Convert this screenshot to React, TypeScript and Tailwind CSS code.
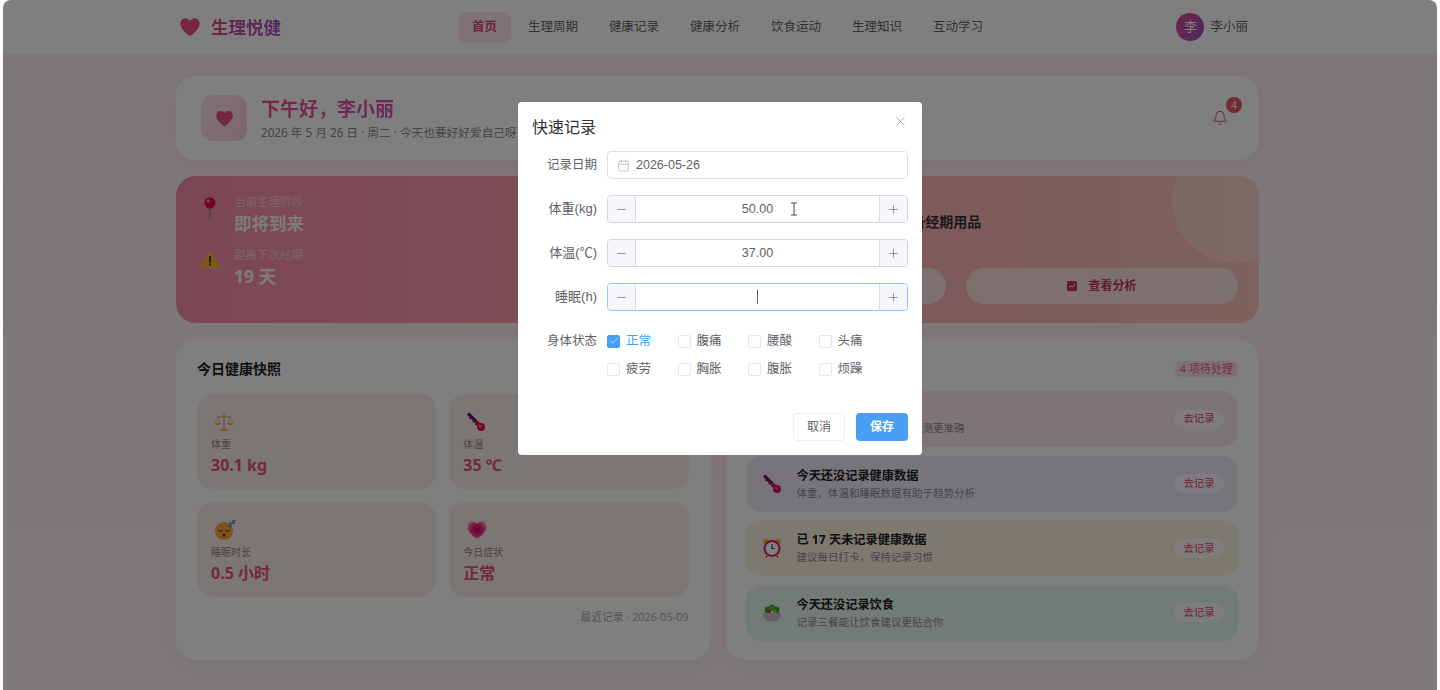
import type { ReactNode } from "react";
import { Bell, Calendar, Minus, Plus, X, Check } from "lucide-react";

const navItems = ["生理周期", "健康记录", "健康分析", "饮食运动", "生理知识", "互动学习"];
const statusItems = ["正常", "腹痛", "腰酸", "头痛", "疲劳", "胸胀", "腹胀", "烦躁"];
const heartPath =
  "M12 21.5c-.6 0-1.2-.3-1.7-.7C6.6 17.6 1.5 13.6 1.5 8.2 1.5 4.9 4 2.5 7 2.5c2 0 3.8 1 5 2.7 1.2-1.7 3-2.7 5-2.7 3 0 5.5 2.4 5.5 5.7 0 5.4-5.1 9.4-8.8 12.6-.5.4-1.1.7-1.7.7z";

function Heart({ className }: { className: string }) {
  return (
    <svg viewBox="0 0 24 24" className={className} fill="#ea4c89">
      <path d={heartPath} />
    </svg>
  );
}

function PinIcon() {
  return (
    <svg viewBox="0 0 20 24" className="h-6 w-5">
      <line x1="10" y1="11" x2="10" y2="22" stroke="#8a8a8a" strokeWidth="1.5" />
      <circle cx="10" cy="7" r="5.5" fill="#e5004f" />
      <circle cx="8.3" cy="5" r="1.6" fill="#ff8fb0" />
    </svg>
  );
}

function WarnIcon() {
  return (
    <svg viewBox="0 0 20 20" className="h-5 w-5">
      <path d="M10 2 L19.5 18.5 H0.5 Z" fill="#f5b82e" stroke="#f5b82e" strokeLinejoin="round" />
      <rect x="9.1" y="7" width="1.8" height="6.5" fill="#3a2a10" />
      <rect x="9.1" y="14.6" width="1.8" height="1.9" fill="#3a2a10" />
    </svg>
  );
}

function ScaleIcon() {
  return (
    <svg viewBox="0 0 20 20" className="h-5 w-5" fill="none">
      <line x1="10" y1="1" x2="10" y2="17" stroke="#b9a27a" strokeWidth="1" />
      <line x1="3" y1="5" x2="17" y2="5" stroke="#c9a25a" strokeWidth="1" />
      <path d="M3.5 5 L1 11 M3.5 5 L6 11 M16.5 5 L14 11 M16.5 5 L19 11" stroke="#c9b48a" strokeWidth=".6" />
      <path d="M.5 11 H6.5 C6.5 14 .5 14 .5 11 Z M13.5 11 H19.5 C19.5 14 13.5 14 13.5 11 Z" fill="#f0b84a" />
      <path d="M5.5 19 C6 17 8 16.5 10 16.5 C12 16.5 14 17 14.5 19 Z" fill="#f0b84a" />
    </svg>
  );
}

function ThermoIcon() {
  return (
    <svg viewBox="0 0 20 20" className="h-5 w-5" fill="none">
      <line x1="3" y1="2.5" x2="14" y2="13.5" stroke="#5a1a60" strokeWidth="3.2" strokeLinecap="round" />
      <path d="M3.5 7 L6 4.5 M6.5 10 L9 7.5 M9.5 13 L12 10.5" stroke="#5a1a60" strokeWidth="1.2" />
      <line x1="9" y1="9" x2="14" y2="14" stroke="#e0104f" strokeWidth="3.2" />
      <circle cx="15" cy="15" r="4" fill="#e0104f" />
      <circle cx="14.2" cy="14.2" r="1.2" fill="#ff7aa0" />
    </svg>
  );
}

function SleepIcon() {
  return (
    <svg viewBox="0 0 22 20" className="h-5 w-[22px]" fill="none">
      <circle cx="10" cy="11" r="9" fill="#f7a63a" />
      <path d="M4.5 10.5 Q6.5 12 8.5 10.5 M11.5 10.5 Q13.5 12 15.5 10.5" stroke="#5a3010" strokeWidth="1" strokeLinecap="round" />
      <ellipse cx="10" cy="15" rx="1.4" ry="1.7" fill="#8a3a14" />
      <path d="M15 3 H18 L15 6.5 H18 M18 .8 H21 L18 3.5 H21" stroke="#4a90c8" strokeWidth="1.2" />
    </svg>
  );
}

function GlowHeartIcon() {
  return (
    <svg viewBox="0 0 24 24" className="h-[22px] w-[22px]">
      <defs>
        <radialGradient id="glow" cx="50%" cy="48%" r="55%">
          <stop offset="0%" stopColor="#d8004f" />
          <stop offset="55%" stopColor="#ea2f7e" />
          <stop offset="100%" stopColor="#f7a0cc" />
        </radialGradient>
      </defs>
      <path d={heartPath} fill="url(#glow)" />
    </svg>
  );
}

function AlarmIcon() {
  return (
    <svg viewBox="0 0 20 22" className="h-[22px] w-5" fill="none">
      <circle cx="4" cy="4.5" r="3" fill="#f0b84a" />
      <circle cx="16" cy="4.5" r="3" fill="#f0b84a" />
      <circle cx="10" cy="11.5" r="7.5" fill="#fff" stroke="#e5195f" strokeWidth="2" />
      <path d="M10 7 V11.5 H13" stroke="#444" strokeWidth="1.1" />
      <path d="M5 18.5 L4 20.5 M15 18.5 L16 20.5" stroke="#e5195f" strokeWidth="1.6" />
    </svg>
  );
}

function SaladIcon() {
  return (
    <svg viewBox="0 0 20 20" className="h-5 w-5">
      <circle cx="6" cy="7" r="3.4" fill="#3f9a3c" />
      <circle cx="14" cy="7" r="3.4" fill="#3f9a3c" />
      <circle cx="10" cy="4.6" r="3.2" fill="#57b04a" />
      <circle cx="7" cy="8.4" r="1.6" fill="#e5333f" />
      <circle cx="13" cy="8.4" r="1.6" fill="#f0b03a" />
      <path d="M1 10 H19 C19 16 15.5 18.5 10 18.5 C4.5 18.5 1 16 1 10 Z" fill="#c9bed0" />
    </svg>
  );
}

function ChartBadge() {
  return (
    <svg viewBox="0 0 10 10" className="h-[10px] w-[10px]" fill="none">
      <rect width="10" height="10" rx="1" fill="#c03a5a" />
      <path d="M2 7 L4 5 L5.5 6 L8 3" stroke="#fff" strokeWidth=".9" />
    </svg>
  );
}

function NumberRow({ label, value, focused }: { label: string; value: string; focused?: boolean }) {
  return (
    <div className="flex items-center">
      <div className="w-[79px] text-right text-[13px] text-[#606266]">{label}</div>
      <div
        className={`ml-[10px] flex h-7 w-[301px] overflow-hidden rounded border ${
          focused ? "border-[#8cc5ff]" : "border-[#cfd6e0]"
        }`}
      >
        <div className="flex w-7 items-center justify-center border-r border-[#dcdfe6] bg-[#f5f7fa] text-[#606266]">
          <Minus size={13} strokeWidth={1.2} />
        </div>
        <div className="flex flex-1 items-center justify-center text-[12.5px] text-[#606266]">
          {focused ? <span className="h-[14px] w-px bg-[#606266]" /> : value}
        </div>
        <div className="flex w-7 items-center justify-center border-l border-[#dcdfe6] bg-[#f5f7fa] text-[#606266]">
          <Plus size={13} strokeWidth={1.2} />
        </div>
      </div>
    </div>
  );
}

function Stat({ icon, label, value }: { icon: ReactNode; label: string; value: string }) {
  return (
    <div className="h-[95px] rounded-2xl bg-[#f8ece8] pl-[14px] pt-[18px]">
      <div className="flex h-5 items-center pl-[3px]">{icon}</div>
      <div className="mt-[4px] text-[10px] leading-4 text-[#8c8c8c]">{label}</div>
      <div className="mt-px text-base leading-6 font-bold text-[#e84f88]">{value}</div>
    </div>
  );
}

function Todo({ icon, title, desc, bg }: { icon: ReactNode; title: string; desc: string; bg: string }) {
  return (
    <div className={`flex h-[56px] items-center rounded-2xl pl-4 pr-[14px] ${bg}`}>
      <div className="w-[35px]">{icon}</div>
      <div className="flex-1">
        <div className="text-[12.2px] leading-[18px] font-bold text-[#222]">{title}</div>
        <div className="text-[10.5px] leading-4 text-[#8c8c8c]">{desc}</div>
      </div>
      <div className="flex h-[19px] w-[50px] items-center justify-center rounded-full bg-white/70 text-[10.3px] font-medium text-[#ee5a90]">去记录</div>
    </div>
  );
}

export default function App() {
  return (
    <div className="relative h-[690px] w-[1440px] overflow-hidden bg-white font-['Noto_Sans','Noto_Sans_CJK_SC',sans-serif]">
      <div className="absolute inset-0 left-[3px] right-[3px] overflow-hidden rounded-t-lg bg-gradient-to-b from-[#fdeef2] to-[#fdf2f5]">
        <header className="flex h-[54px] items-center bg-white pl-[176px] pr-[189px]">
          <div className="flex w-[279px] items-center">
            <Heart className="h-[22px] w-[22px]" />
            <span className="ml-[10px] bg-gradient-to-r from-[#e0457f] to-[#9b4dca] bg-clip-text text-[17.5px] font-bold text-transparent">生理悦健</span>
          </div>
          <nav className="flex items-center gap-[3px] text-[12.5px] text-[#666]">
            <div className="flex h-[31px] items-center rounded-lg bg-[#fce4ec] px-[14px] font-bold text-[#e0457f]">首页</div>
            {navItems.map((n) => (
              <div key={n} className="px-[14px]">{n}</div>
            ))}
          </nav>
          <div className="ml-auto flex items-center gap-[6px]">
            <div className="flex h-7 w-7 items-center justify-center rounded-full bg-gradient-to-br from-[#e0457f] to-[#9b4dca] text-[13px] text-white">李</div>
            <span className="text-[12.5px] text-[#666]">李小丽</span>
          </div>
        </header>

        <main className="ml-[173px] mt-[22px] flex w-[1083px] flex-col gap-4">
          <section className="flex h-[84px] items-center rounded-[20px] bg-white pl-[25px] pr-[21px] shadow-[0_4px_20px_rgba(224,69,127,0.08)]">
            <div className="flex h-[46px] w-[46px] items-center justify-center rounded-xl bg-gradient-to-br from-[#fde2ea] to-[#fbcfdc]">
              <Heart className="h-[19px] w-[19px]" />
            </div>
            <div className="ml-[14px]">
              <div className="bg-gradient-to-r from-[#f0508e] to-[#c050c8] bg-clip-text text-[19px] leading-[26px] font-bold text-transparent">下午好，李小丽</div>
              <div className="mt-[2px] text-[11.7px] leading-4 text-[#8c8c8c]">2026 年 5 月 26 日 · 周二 · 今天也要好好爱自己呀</div>
            </div>
            <div className="relative ml-auto flex h-9 w-9 items-center justify-center rounded-full bg-white/60 text-[#e0457f]">
              <Bell size={16} strokeWidth={1.5} />
              <span className="absolute -right-1 -top-[3px] flex h-4 w-4 items-center justify-center rounded-full bg-[#e85565] text-[10px] text-white">4</span>
            </div>
          </section>

          <section className="relative flex h-[147px] justify-between overflow-hidden rounded-[20px] bg-gradient-to-r from-[#f78da8] to-[#fbc4bc]">
            <div className="flex flex-col gap-3 pl-6 pt-[18px]">
              <div className="flex">
                <div className="w-[34px] pt-[2px]"><PinIcon /></div>
                <div>
                  <div className="text-[11.5px] leading-4 text-white/50">当前生理阶段</div>
                  <div className="mt-px text-[17.5px] leading-6 font-bold text-white/90">即将到来</div>
                </div>
              </div>
              <div className="flex">
                <div className="w-[34px] pt-[2px]"><WarnIcon /></div>
                <div>
                  <div className="text-[11.5px] leading-4 text-white/50">距离下次经期</div>
                  <div className="mt-px text-[17.5px] leading-6 font-bold text-white/90">19 天</div>
                </div>
              </div>
            </div>
            <div className="absolute -right-[39px] -top-[39px] h-[126px] w-[126px] rounded-full bg-white/25" />
            <div className="relative w-[585px] pr-[21px] pt-[36px]">
              <div className="pl-1 text-sm leading-5 font-bold text-[#333]">距离下次经期还有 19 天，建议提前准备经期用品</div>
              <div className="mt-[36px] grid grid-cols-2 gap-5 text-xs font-bold text-[#c03a5a]">
                <div className="flex h-9 items-center justify-center rounded-full bg-white/60">记录经期</div>
                <div className="flex h-9 items-center justify-center gap-[11px] rounded-full bg-white/55">
                  <ChartBadge />
                  <span>查看分析</span>
                </div>
              </div>
            </div>
          </section>

          <section className="grid h-[321px] grid-cols-2 gap-4">
            <div className="rounded-[20px] bg-white px-[21px] pt-5 shadow-[0_4px_20px_rgba(224,69,127,0.08)]">
              <h2 className="text-sm leading-5 font-bold text-[#222]">今日健康快照</h2>
              <div className="mt-[15px] grid grid-cols-2 gap-[13px]">
                <Stat icon={<ScaleIcon />} label="体重" value="30.1 kg" />
                <Stat icon={<ThermoIcon />} label="体温" value="35 ℃" />
                <Stat icon={<SleepIcon />} label="睡眠时长" value="0.5 小时" />
                <Stat icon={<GlowHeartIcon />} label="今日症状" value="正常" />
              </div>
              <div className="mt-[12px] text-right text-[10.8px] text-[#aaa]">最近记录 · 2026-05-09</div>
            </div>
            <div className="rounded-[20px] bg-white pl-5 pr-[21px] pt-5 shadow-[0_4px_20px_rgba(224,69,127,0.08)]">
              <div className="flex items-center justify-between">
                <h2 className="text-sm leading-5 font-bold text-[#222]">今日待办</h2>
                <span className="rounded-md bg-[#fde2ea] px-[5px] text-[11px] text-[#ee5a90]">4 项待处理</span>
              </div>
              <div className="mt-3 flex flex-col gap-[8.67px]">
                <Todo icon={<PinIcon />} title="记录经期" desc="记录经期开始日期，会让预测更准确" bg="bg-[#fbe9ec]" />
                <Todo icon={<ThermoIcon />} title="今天还没记录健康数据" desc="体重、体温和睡眠数据有助于趋势分析" bg="bg-[#efe8f8]" />
                <Todo icon={<AlarmIcon />} title="已 17 天未记录健康数据" desc="建议每日打卡，保持记录习惯" bg="bg-[#fbf2e2]" />
                <Todo icon={<SaladIcon />} title="今天还没记录饮食" desc="记录三餐能让饮食建议更贴合你" bg="bg-[#e6f6ec]" />
              </div>
            </div>
          </section>
        </main>
      </div>

      <div className="absolute inset-0 left-[3px] right-[3px] rounded-t-lg bg-black/50" />

      <div className="absolute left-[518px] top-[102px] h-[353px] w-[404px] rounded-sm bg-white font-['Liberation_Sans','Noto_Sans_CJK_SC',sans-serif]">
        <X size={15} strokeWidth={1.1} className="absolute right-[14px] top-[12px] text-[#909399]" />
        <div className="px-[14px] pt-[14px] text-base leading-6 text-[#303133]">快速记录</div>
        <div className="mt-[11px] flex flex-col gap-4">
          <div className="flex items-center">
            <div className="w-[79px] text-right text-[12.5px] text-[#606266]">记录日期</div>
            <div className="ml-[10px] flex h-7 w-[301px] items-center rounded border border-[#dcdfe6] pl-[9px] text-[12.5px] text-[#606266]">
              <Calendar size={13} strokeWidth={1.2} className="text-[#a8abb2]" />
              <span className="ml-[6px]">2026-05-26</span>
            </div>
          </div>
          <NumberRow label="体重(kg)" value="50.00" />
          <NumberRow label="体温(℃)" value="37.00" />
          <NumberRow label="睡眠(h)" value="" focused />
          <div className="flex">
            <div className="w-[79px] text-right text-[12.5px] leading-7 text-[#606266]">身体状态</div>
            <div className="ml-[10px] grid w-[282px] grid-cols-4">
              {statusItems.map((s, i) => (
                <label key={s} className="flex h-7 items-center">
                  <span className={`flex h-[13px] w-[13px] items-center justify-center rounded-[2px] border ${i === 0 ? "border-[#409eff] bg-[#409eff]" : "border-[#e4e7ed]"}`}>
                    {i === 0 && <Check size={10} strokeWidth={1.8} className="text-white" />}
                  </span>
                  <span className={`ml-[6px] text-[12.5px] ${i === 0 ? "text-[#409eff]" : "text-[#606266]"}`}>{s}</span>
                </label>
              ))}
            </div>
          </div>
        </div>
        <div className="absolute bottom-[14px] right-[14px] flex gap-[11px] text-xs">
          <button className="h-7 w-[52px] rounded border border-[#ebeef5] text-[#606266]">取消</button>
          <button className="h-7 w-[52px] rounded bg-[#4a9ff5] font-bold text-white">保存</button>
        </div>
        {/* mouse pointer over the weight field */}
        <svg viewBox="0 0 8 14" className="absolute left-[272px] top-[100px] h-[14px] w-2" fill="none" stroke="#444" strokeWidth="1">
          <path d="M1 1 H7 M4 1 V13 M1 13 H7" />
        </svg>
      </div>
    </div>
  );
}
